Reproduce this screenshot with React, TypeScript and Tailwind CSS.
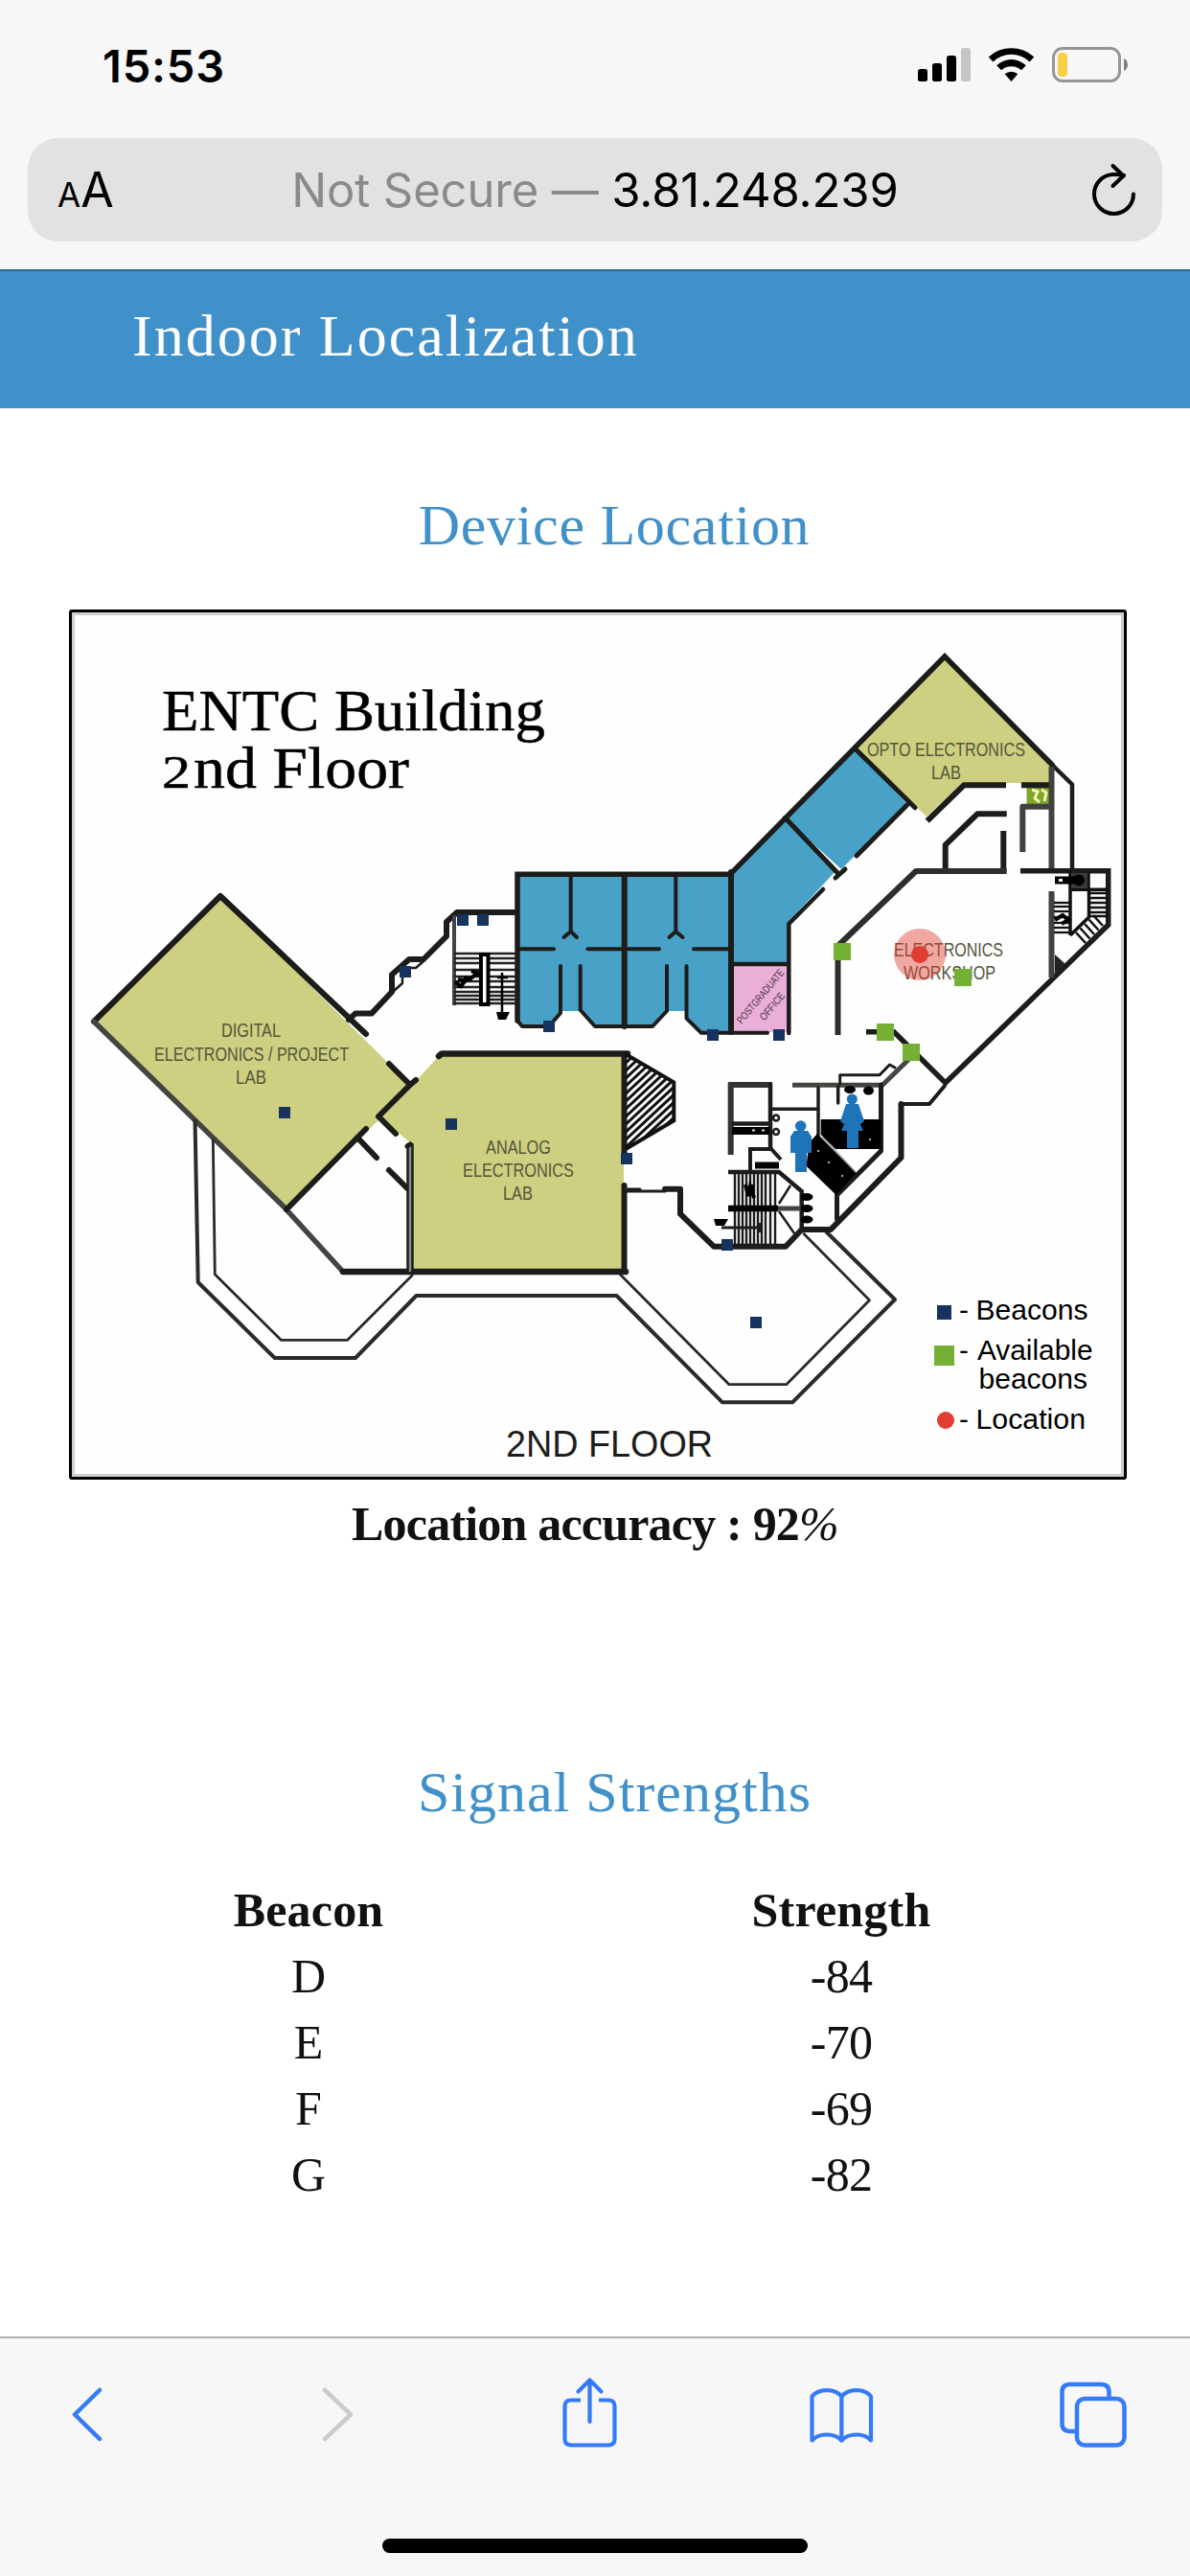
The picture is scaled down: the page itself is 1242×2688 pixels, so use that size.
import type { ReactNode } from 'react';

const SERIF = "font-['Liberation_Serif',serif]";
const WALL = '#1c1c1a';
const THIN = '#2a2a28';
const OLIVE = '#cdd080';
const BLUE = '#48a1c7';
const NAVY = '#16335f';
const GREEN = '#74b033';
const RED = '#e13d32';

const beacons: [number, number][] = [
  [291, 1155], [477, 954], [498, 954], [417, 1008], [567, 1065], [738, 1074],
  [465, 1167], [648, 1203], [753, 1293], [807, 1074], [783, 1374],
];

const availableBeacons: [number, number][] = [
  [870, 984], [996, 1011], [915, 1068], [942, 1089],
];

const readings = [
  { beacon: 'D', strength: '-84' },
  { beacon: 'E', strength: '-70' },
  { beacon: 'F', strength: '-69' },
  { beacon: 'G', strength: '-82' },
];

function StatusBar() {
  return (
    <div className="flex h-[136px] items-center justify-between pl-[107px] pr-[64px]">
      <span className="font-[Inter,sans-serif] text-[47px] font-semibold leading-none tracking-[0.8px] text-black">15:53</span>
      <svg className="h-[60px] w-[224px]" viewBox="954 38 224 60">
        <g fill="#000">
          <rect x="958" y="72" width="10" height="13" rx="2.5" />
          <rect x="973" y="66" width="10" height="19" rx="2.5" />
          <rect x="988" y="58" width="10" height="27" rx="2.5" />
          <rect x="1003" y="50" width="10" height="35" rx="2.5" fill="#c5c5c5" />
          <path d="M1031.7 59.5 A35 35 0 0 1 1079.3 59.5 L1074.6 64.4 A28 28 0 0 0 1036.4 64.4 Z" />
          <path d="M1040.2 68.3 A22 22 0 0 1 1070.8 68.3 L1066 73.3 A15.5 15.5 0 0 0 1045 73.3 Z" />
          <path d="M1048.7 77.3 A10 10 0 0 1 1062.3 77.3 L1055.5 85 Z" />
        </g>
        <rect x="1099.5" y="50.5" width="69" height="34" rx="9.5" fill="none" stroke="#969696" strokeWidth="3" />
        <rect x="1104" y="55" width="10" height="25" rx="4" fill="#f9ce46" />
        <path d="M1173 61 C1178.300 63 1178.300 72 1173 74 Z" fill="#808080" />
      </svg>
    </div>
  );
}

function AddressBar() {
  return (
    <div className="mx-[29px] mt-[8px] grid h-[108px] grid-cols-[160px_1fr_160px] items-center rounded-[32px] bg-[#e2e2e2] font-[Inter,sans-serif] leading-none text-black">
      <div className="flex items-baseline pl-[31px]">
        <span className="text-[35px]">A</span>
        <span className="text-[50px]">A</span>
      </div>
      <div className="whitespace-nowrap text-center text-[49px] tracking-[-0.15px]">
        <span className="text-[#8a8a8a]">Not Secure — </span>
        <span>3.81.248.239</span>
      </div>
      <svg className="ml-auto mr-[24px] h-[64px] w-[52px]" viewBox="1137 166 52 64" fill="none" stroke="#000" strokeWidth="4" strokeLinecap="round" strokeLinejoin="round">
        <path d="M1173 183 C1169 182 1166 182 1162.500 182 A20.500 20.500 0 1 0 1183 202.500" />
        <path d="M1161.500 173 L1172.500 183.500 L1161.500 194" />
      </svg>
    </div>
  );
}

function Lab({ x, y, w, size = 20, children }: { x: number; y: number; w: number; size?: number; children: ReactNode }) {
  return (
    <text x={x} y={y} fontSize={size} textLength={w} lengthAdjust="spacingAndGlyphs" fill="#55553c">
      {children}
    </text>
  );
}

function Rooms() {
  return (
    <g>
      <g fill={OLIVE}>
        <path d="M230 935 L98 1066 L298 1262 L395 1169 L428 1132 Z" />
        <path d="M458 1102 H651 V1327 H430 V1194 L396 1165 L434 1128 Z" />
        <path d="M986 685 L1098 798 V817 H1005 L967 852 L893 782 Z" />
      </g>
      <g fill={BLUE}>
        <path d="M540 913 H763 V1077 H732 L716 1062 V1055 H696 L680 1071 H621 L606 1055 H585 L572 1071 H545 L540 1065 Z" />
        <path d="M762 910 L819 853 L872 909 L822 963 V1005 H762 Z" />
        <path d="M819 853 L893 782 L947 839 L890 895 L878 907 Z" />
      </g>
      <rect x="765" y="1007" width="57" height="70" fill="#e9afd6" />
      <rect x="1071.500" y="818" width="27" height="25" fill="#7fa52e" />
      <path d="M1077 824 l6 2 l-3 7 l5 4 M1087 824 l5 3 l-2 9" stroke="#f3f3b5" strokeWidth="3" fill="none" />
    </g>
  );
}

function Walls() {
  return (
    <g fill="none" stroke={WALL} strokeWidth="6" strokeLinejoin="round" strokeLinecap="round">
      {/* digital electronics lab */}
      <path d="M98 1066 L230 935 L382 1079" />
      <path d="M98 1066 L296 1259 L358 1327" stroke="#444441" strokeWidth="5.500" />
      <path d="M406 1110 L428 1132 L434 1127 M428 1132 L395 1165 L413 1183 M382 1178 L299 1262 M373 1187 L393 1208 M406 1221 L425 1240" />
      {/* west entry */}
      <path d="M364 1064 L371 1057.400 H388 L409 1035 V1017 L427 1001 H442 L466 977 V962 L477 952 H538" strokeWidth="6" />
      <path d="M420 1014 L420 1026 L411 1034 M442 1003 L434 1010 H424" strokeWidth="2.500" />
      {/* analog lab */}
      <path d="M458 1102 L461 1099.500 H655" strokeWidth="6.500" />
      <path d="M651.500 1100 V1206 M651.500 1237 V1327" />
      <path d="M358 1327 H653" strokeWidth="6.500" />
      <path d="M428 1196 V1327" strokeWidth="6" stroke="#8a8a84" strokeLinecap="butt" />
      <path d="M425.500 1194 V1327 M430.500 1194 V1327" strokeWidth="2.500" />
      <path d="M425 1196 L428 1194" strokeWidth="5" />
      {/* terraces */}
      <g stroke={THIN} strokeLinecap="butt">
        <path d="M203.500 1168 L206.700 1338 L286.700 1417 H371 L434.500 1352 H643.500 L754 1463.300 H827 L934 1356 L862 1285" strokeWidth="4" />
        <path d="M222.300 1188 L224.300 1329.800 L293.300 1398.300 H362.700 L431 1330 M646.700 1329.300 L761 1444.700 H820.700 L907.500 1356.700 L838.300 1286.700" strokeWidth="2.800" />
      </g>
      {/* central rooms */}
      <path d="M540 1065 V912.300 H762 L986 685 L1098.300 798.300" strokeLinejoin="miter" strokeWidth="5.500" />
      <path d="M1098 798 L1119 818.500 V908" strokeWidth="4.500" />
      <path d="M540 1065 L545 1071 H573 L585 1057 V1008 M605.700 1008 V1054 L621 1071 H681 L696 1055 V1008 M716.500 1008 V1062.700 L731.700 1077.700 H801" strokeWidth="4" />
      <path d="M651.700 913 V1071 M763 910 V1077" />
      <path d="M595.700 914 V972 M588.500 978 L595.700 972 L602 978 M705.300 914 V972 M698.500 978 L705.300 972 L712.500 978 M542 990.300 H578 M613.500 990.300 H688 M724 990.300 H761" strokeWidth="4" />
      <path d="M823.300 1078 V964 L859 928 M765 1006 H822" strokeWidth="4.500" />
      <path d="M819.300 853.300 L875 911.700 M882 907 L872 916 M893.300 782 L955 842.700 M946.700 840 L894 893" strokeWidth="5" />
      {/* opto lab and north-east corridor */}
      <path d="M967.700 856.700 L1006 819.300 H1050 M1066 819.300 H1097" strokeLinecap="butt" />
      <path d="M1097.500 800 V909 M1067.300 889 V841.700 H1097" strokeLinecap="butt" stroke="#41413e" />
      <path d="M1050.700 849.300 H1020 L986.700 881.700 V909 M1047.300 867 V909" strokeLinecap="butt" />
      <path d="M1050.700 909 H956 L874.500 987 V1080" strokeLinecap="butt" stroke="#2d2d2b" />
      <path d="M1065 908.700 H1156.700 V965 L986.700 1130 L933 1076.700 H904" strokeLinecap="butt" strokeLinejoin="miter" strokeWidth="5.500" />
      <path d="M1097.500 930 V1020" strokeLinecap="butt" stroke="#41413e" />
      {/* south-east */}
      <path d="M986 1133 L970 1152 H940" strokeWidth="4" />
      <path d="M940.500 1152 V1208 L867 1283 H836.700 L820 1300.700 H745 L710 1266.700 V1240.700 H694" strokeWidth="6" />
      <path d="M668 1241 H655 M694 1243 H655" strokeWidth="3" />
      <path d="M827 1132.300 H921 L951 1103" strokeWidth="5" stroke="#444441" strokeLinecap="butt" />
      <path d="M876.700 1131 V1121.700 H918 L928.500 1111 L934 1114" strokeWidth="3" />
      <path d="M919.500 1132 V1201 L873.500 1247 V1272" strokeWidth="5" />
      <path d="M854 1135 V1186 M806 1157.300 H854 M874.700 1134 V1151" strokeWidth="3.500" />
    </g>
  );
}

function Hatching() {
  return (
    <g>
      <clipPath id="hatch">
        <path d="M653 1100 L703.300 1129.300 V1169.300 L653 1199 Z" />
      </clipPath>
      <g clipPath="url(#hatch)" stroke="#111" strokeWidth="3">
        {Array.from({ length: 20 }, (_, i) => (
          <path key={i} d={`M650 ${1112 + i * 8} l60 -56`} />
        ))}
      </g>
      <path d="M653 1100 L703.300 1129.300 V1169.300 L653 1199" fill="none" stroke="#111" strokeWidth="4" />
    </g>
  );
}

function WestStairs() {
  const steps = [995, 1000, 1005, 1012, 1019, 1024, 1030, 1035, 1039, 1043, 1047];
  return (
    <g stroke="#222" fill="none">
      <path d="M474 955 V1049" strokeWidth="4" stroke="#444" />
      {steps.map((y) => (
        <path key={y} d={`M474 ${y} H538`} strokeWidth="2.300" />
      ))}
      <rect x="502" y="996" width="7.500" height="52" fill="#fff" strokeWidth="4" stroke="#000" />
      <path d="M475 1025 l6 4 l5 -6 l-8 -1 M484 1020 l6 2 l10 -8 M492 1013 l11 5" strokeWidth="4" stroke="#000" />
      <path d="M524 1015 V1058 M519 1020 H530" strokeWidth="2.500" stroke="#000" />
      <path d="M518 1056 H532 L528 1064 H520 Z" fill="#000" stroke="none" />
    </g>
  );
}

function EastStairs() {
  return (
    <g stroke="#111" fill="none">
      <path d="M1117 909 V976 M1117 928.300 H1156 M1136 909 V928 M1136.500 928 V957 L1117 976" strokeWidth="3.500" />
      <rect x="1118" y="911" width="17" height="16" fill="#3a3a38" stroke="none" />
      <path d="M1101 918.500 H1130" strokeWidth="8" stroke="#000" />
      <circle cx="1126" cy="918.500" r="6" fill="#000" stroke="none" />
      <path d="M1105 918.500 h4" stroke="#fff" strokeWidth="3" />
      {[932, 937, 942, 947, 952, 956].map((y) => (
        <path key={y} d={`M1137 ${y} H1156`} strokeWidth="2.500" />
      ))}
      {[942, 946, 951, 957, 963, 968, 973].map((y) => (
        <path key={y} d={`M1100 ${y} H1117`} strokeWidth="2.300" />
      ))}
      <path d="M1101 960 l8 -5 l6 5 l-7 4" strokeWidth="4" stroke="#000" />
      {[0, 1, 2, 3, 4].map((i) => (
        <path key={i} d={`M${1123 + i * 4.5} ${973 - i * 4.5} l10 11`} strokeWidth="2.600" />
      ))}
      <path d="M1101 996 L1112 1006 L1101 1017 Z" fill="#222" stroke="none" />
    </g>
  );
}

function ServiceCore() {
  return (
    <g stroke={WALL} fill="none">
      {/* lift */}
      <path d="M760 1132 H806 M762.700 1130 V1205" strokeWidth="6" stroke="#333" />
      <path d="M804 1130 V1198 M764 1172.500 H804" strokeWidth="4.500" />
      <path d="M764 1180 H803" strokeWidth="8" stroke="#000" />
      <path d="M785 1179.500 h3 M795 1179.500 h3" strokeWidth="2" stroke="#ddd" />
      <circle cx="810" cy="1166.500" r="3" strokeWidth="2.500" />
      <circle cx="810" cy="1181" r="3" strokeWidth="2.500" />
      <path d="M783 1221 V1199 H805 L815 1210" strokeWidth="4" />
      <path d="M788 1216 H813" strokeWidth="7" stroke="#000" />
      {/* main stairs */}
      <path d="M760 1223 H813 L836.700 1243 V1283" strokeWidth="4.500" />
      {[767, 771, 775, 779, 783, 787, 791, 795, 799, 804, 809].map((x) => (
        <path key={x} d={`M${x} 1223 V1299`} strokeWidth="2.400" />
      ))}
      <path d="M760 1261 H812" strokeWidth="6.500" stroke="#000" />
      <path d="M812 1261 H836" strokeWidth="5" stroke="#444" />
      <path d="M813 1256 L825 1237 M813 1264 L829 1287" strokeWidth="2.500" />
      <path d="M778 1236 l3 12 l2 -10 l4 12 M785 1236 v8" strokeWidth="4" stroke="#000" />
      <path d="M745 1272 H760 L756 1279 H747 Z" fill="#000" stroke="none" />
      <path d="M753 1281 H796 M793 1276 V1286" strokeWidth="3" />
      <g fill="#000" stroke="none">
        <ellipse cx="842" cy="1249" rx="6.500" ry="4" />
        <ellipse cx="842" cy="1261" rx="6.500" ry="4" />
        <ellipse cx="842" cy="1272.500" rx="6.500" ry="4" />
        {/* washrooms */}
        <path d="M856.700 1168 H919.300 V1199 H872 L856.700 1184 Z" />
        <path d="M853 1183 L893.500 1224 L872.700 1247 L841.700 1217 L844 1193 Z" />
        <ellipse cx="887" cy="1137" rx="6" ry="4" />
        <ellipse cx="906.500" cy="1138" rx="5.500" ry="4.500" />
      </g>
      <path d="M858 1186 L893 1223 M856.500 1174 V1184" strokeWidth="1.300" stroke="#999" />
      <path d="M853 1201 h2 M864 1213 h2 M878 1227 h2 M907 1189 h2" strokeWidth="2" stroke="#aaa" />
      <g fill="#1f73b7" stroke="none">
        <circle cx="889.300" cy="1147" r="5.500" />
        <path d="M883 1152 H896 L902 1170 L898 1173 L901 1180 H896 V1198 H884 V1180 H878 L881 1173 L877 1170 Z" />
        <circle cx="835.700" cy="1175" r="5.800" />
        <path d="M829 1180 H843 L847 1186 V1203 H842 V1223 H830 V1203 H825 V1186 Z" />
      </g>
    </g>
  );
}

function FloorPlan() {
  return (
    <div className="ml-[72px] mt-[58px] h-[908px] w-[1104px] overflow-hidden rounded-[3px] border-[3px] border-black bg-[#d0cecf] p-[3px]">
      <svg className="block h-[896px] w-[1092px] bg-[#fefefe] font-['Liberation_Sans',sans-serif]" viewBox="78 642 1092 896">
        <g className="font-['Liberation_Serif',serif]" fill="#000" stroke="#000" strokeWidth="0.5">
          <text x="169" y="762" fontSize="62" textLength="400" lengthAdjust="spacingAndGlyphs">ENTC Building</text>
          <text x="169" y="822" fontSize="48" textLength="30" lengthAdjust="spacingAndGlyphs">2</text>
          <text x="202" y="822" fontSize="61" textLength="225" lengthAdjust="spacingAndGlyphs">nd Floor</text>
        </g>
        <Rooms />
        <Walls />
        <Hatching />
        <WestStairs />
        <EastStairs />
        <ServiceCore />
        <Lab x={231} y={1081.5} w={62}>DIGITAL</Lab>
        <Lab x={161} y={1106.5} w={203}>ELECTRONICS / PROJECT</Lab>
        <Lab x={246} y={1131} w={32}>LAB</Lab>
        <Lab x={507} y={1203.5} w={68}>ANALOG</Lab>
        <Lab x={483} y={1228} w={116}>ELECTRONICS</Lab>
        <Lab x={525} y={1251.5} w={31}>LAB</Lab>
        <Lab x={905} y={788.500} w={165}>OPTO ELECTRONICS</Lab>
        <Lab x={972} y={812.500} w={31}>LAB</Lab>
        <Lab x={933} y={997.500} w={114} size={21}>ELECTRONICS</Lab>
        <Lab x={943} y={1021.500} w={96} size={21}>WORKSHOP</Lab>
        <g transform="translate(774 1069) rotate(-50)" fill="#4d3348">
          <text fontSize="11" textLength="70" lengthAdjust="spacingAndGlyphs">POSTGRADUATE</text>
          <text x="18" y="16" fontSize="11" textLength="34" lengthAdjust="spacingAndGlyphs">OFFICE</text>
        </g>
        <text x="528" y="1520" fontSize="38.500" textLength="216" lengthAdjust="spacingAndGlyphs" fill="#1d1d1b">2ND FLOOR</text>

        {beacons.map(([x, y]) => (
          <rect key={`${x}-${y}`} x={x} y={y} width="12" height="12" fill={NAVY} />
        ))}
        <circle cx="960" cy="996" r="27" fill={RED} fillOpacity="0.45" />
        <circle cx="960" cy="996" r="9" fill={RED} />
        {availableBeacons.map(([x, y]) => (
          <rect key={`${x}-${y}`} x={x} y={y} width="18" height="18" fill={GREEN} />
        ))}

        <rect x="978" y="1362" width="15" height="15" fill={NAVY} />
        <rect x="975" y="1404" width="21" height="21" fill={GREEN} />
        <circle cx="987" cy="1482" r="9" fill={RED} />
        <g fontSize="29.500" fill="#000">
          <text x="1001" y="1376.500">-</text>
          <text x="1018.500" y="1376.500" textLength="117" lengthAdjust="spacingAndGlyphs">Beacons</text>
          <text x="1001" y="1419">-</text>
          <text x="1020" y="1419" textLength="120.500" lengthAdjust="spacingAndGlyphs">Available</text>
          <text x="1021.500" y="1449" textLength="113.500" lengthAdjust="spacingAndGlyphs">beacons</text>
          <text x="1001" y="1491">-</text>
          <text x="1018.500" y="1491" textLength="114.500" lengthAdjust="spacingAndGlyphs">Location</text>
        </g>
      </svg>
    </div>
  );
}

function SignalTable() {
  return (
    <div className="ml-[44px] mt-[59px] w-[1112px] text-center text-[50px] leading-[69px] text-[#111]">
      <div className="grid grid-cols-2 font-bold">
        <span className="tracking-[0.2px]">Beacon</span>
        <span className="tracking-[0.2px]">Strength</span>
      </div>
      {readings.map((r) => (
        <div key={r.beacon} className="grid grid-cols-2">
          <span>{r.beacon}</span>
          <span className="tracking-[-0.8px]">{r.strength}</span>
        </div>
      ))}
    </div>
  );
}

function Toolbar() {
  return (
    <div className="flex h-[250px] flex-col border-t-2 border-[#b0b0b0] bg-[#f7f7f7]">
      <div className="flex h-[180px] items-start pl-[71px] pt-[36px] text-[#347bf7]">
        <svg className="h-[86px] w-[40px]" viewBox="71 2476 40 86" fill="none" stroke="currentColor" strokeWidth="4.500" strokeLinecap="round" strokeLinejoin="round">
          <path d="M104 2494 L78 2519.500 L104 2545" />
        </svg>
        <svg className="ml-[221px] h-[86px] w-[40px]" viewBox="332 2476 40 86" fill="none" stroke="#cbcbcb" strokeWidth="4.500" strokeLinecap="round" strokeLinejoin="round">
          <path d="M339 2494 L366 2519.500 L339 2545" />
        </svg>
        <svg className="ml-[211px] h-[86px] w-[64px]" viewBox="583 2476 64 86" fill="none" stroke="currentColor" strokeWidth="4.200" strokeLinecap="round" strokeLinejoin="round">
          <path d="M606 2504.500 H596 Q589.500 2504.500 589.500 2511 V2545 Q589.500 2551.500 596 2551.500 H635 Q641.500 2551.500 641.500 2545 V2511 Q641.500 2504.500 635 2504.500 H625" strokeLinecap="butt" />
          <path d="M615.500 2527 V2485 M603.500 2495.500 L615.500 2483.500 L627.500 2495.500" />
        </svg>
        <svg className="ml-[194px] h-[86px] w-[74px]" viewBox="841 2476 74 86" fill="none" stroke="currentColor" strokeWidth="4.200" strokeLinecap="round" strokeLinejoin="round">
          <path d="M847.500 2546.500 V2500.500 C855 2492 871 2492 878.300 2500.500 V2546.500 C871 2538.500 855 2538.500 847.500 2546.500 Z" />
          <path d="M878.300 2500.500 C886 2492 902 2492 909 2500.500 V2546.500 C902 2538.500 886 2538.500 878.300 2546.500" />
        </svg>
        <svg className="ml-[188px] h-[86px] w-[78px]" viewBox="1103 2476 78 86" fill="none" stroke="currentColor" strokeWidth="4.500">
          <path d="M1123 2537 H1117 Q1108.500 2537 1108.500 2529 V2496 Q1108.500 2488 1117 2488 H1149 Q1157.500 2488 1157.500 2496 V2502" />
          <rect x="1124" y="2503" width="49.500" height="48.500" rx="8" />
        </svg>
      </div>
      <div className="mx-auto mt-[29px] h-[15px] w-[444px] rounded-full bg-black" />
    </div>
  );
}

export default function App() {
  return (
    <div className="flex h-[2688px] w-[1242px] flex-col overflow-hidden bg-white">
      <div className="h-[281px] shrink-0 bg-[#f7f7f7]">
        <StatusBar />
        <AddressBar />
      </div>
      <main className={`${SERIF} flex-1`}>
        <header className="h-[145px] border-t-2 border-[#2d668f] bg-[#4090ca] pl-[138px] pt-[37px]">
          <h1 className="text-[62px] leading-[60px] tracking-[2px] text-white">Indoor Localization</h1>
        </header>
        <section>
          <h2 className="ml-[40px] mt-[92px] text-center text-[60px] leading-[60px] tracking-[0.7px] text-[#4090ca]">Device Location</h2>
          <FloorPlan />
          <p className="mt-[21px] text-center text-[50px] font-bold leading-[50px] tracking-[-0.8px] text-[#111]">
            Location accuracy : 92<span className="font-normal italic">%</span>
          </p>
        </section>
        <section>
          <h2 className="ml-[41px] mt-[225px] text-center text-[60px] leading-[60px] tracking-[1px] text-[#4090ca]">Signal Strengths</h2>
          <SignalTable />
        </section>
      </main>
      <Toolbar />
    </div>
  );
}
